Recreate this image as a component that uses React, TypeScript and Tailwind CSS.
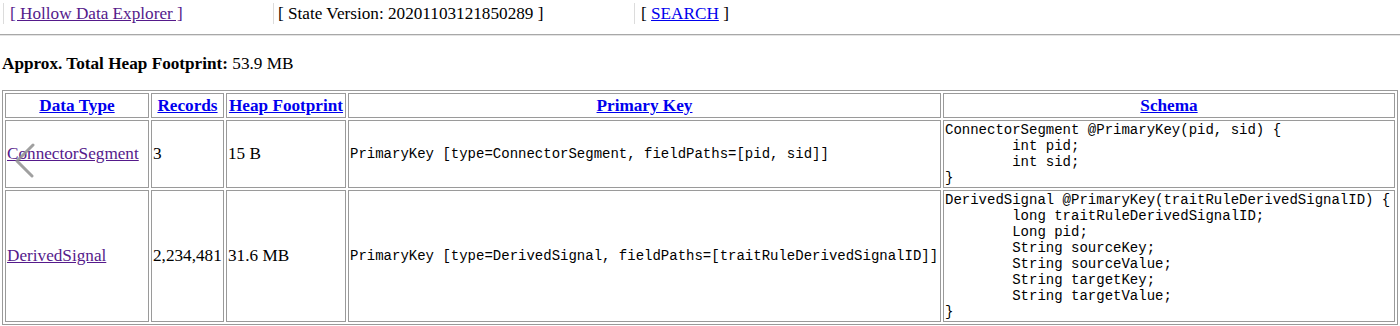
import React from "react";

const serif = "font-['Liberation_Serif','Times_New_Roman',serif]";
const mono = "font-['Liberation_Mono','Courier_New',monospace]";

type Row = {
  name: string;
  records: string;
  heap: string;
  primaryKey: string;
  schema: string[];
};

const rows: Row[] = [
  {
    name: "ConnectorSegment",
    records: "3",
    heap: "15 B",
    primaryKey: "PrimaryKey [type=ConnectorSegment, fieldPaths=[pid, sid]]",
    schema: [
      "ConnectorSegment @PrimaryKey(pid, sid) {",
      "        int pid;",
      "        int sid;",
      "}",
    ],
  },
  {
    name: "DerivedSignal",
    records: "2,234,481",
    heap: "31.6 MB",
    primaryKey: "PrimaryKey [type=DerivedSignal, fieldPaths=[traitRuleDerivedSignalID]]",
    schema: [
      "DerivedSignal @PrimaryKey(traitRuleDerivedSignalID) {",
      "        long traitRuleDerivedSignalID;",
      "        Long pid;",
      "        String sourceKey;",
      "        String sourceValue;",
      "        String targetKey;",
      "        String targetValue;",
      "}",
    ],
  },
];

const cell = "border border-[#9a9a9a] p-px align-middle";

export default function App() {
  return (
    <div className={`${serif} relative h-[326px] w-[1400px] overflow-hidden bg-white text-[17.2px] text-black`}>
      {/* Top nav */}
      <div className="flex pt-[3px]">
        <div className="ml-[3px] h-[21px] w-[270px] border-l border-[#dcdcdc] pl-[6px] leading-[22px]">
          <a href="#" className="text-[#551a8b] underline">[ Hollow Data Explorer ]</a>
        </div>
        <div className="h-[21px] w-[361px] border-l border-[#dcdcdc] pl-[4px] leading-[22px]">
          [ State Version: 20201103121850289 ]
        </div>
        <div className="h-[21px] border-l border-[#dcdcdc] pl-[6px] leading-[22px]">
          [ <a href="#" className="text-[#0000ee] underline">SEARCH</a> ]
        </div>
      </div>
      <div className="mt-[10px] border-t border-b border-t-[#a8a8a8] border-b-[#e4e4e4]" />

      {/* Summary */}
      <div className="mt-[18px] pl-[2px] leading-[20px]">
        <span className="font-bold">Approx. Total Heap Footprint:</span> 53.9 MB
      </div>

      {/* Types table */}
      <table className="ml-[2px] mt-[16px] w-[1396px] table-fixed border-separate border-spacing-[2px] border border-[#9a9a9a]">
        <colgroup>
          <col className="w-[144px]" />
          <col className="w-[73px]" />
          <col className="w-[120px]" />
          <col className="w-[593px]" />
          <col />
        </colgroup>
        <thead>
          <tr className="h-[25px]">
            {["Data Type", "Records", "Heap Footprint", "Primary Key", "Schema"].map((h) => (
              <th key={h} className={`${cell} text-center font-bold leading-[19px] whitespace-nowrap`}>
                <a href="#" className="text-[#0000ee] underline">{h}</a>
              </th>
            ))}
          </tr>
        </thead>
        <tbody>
          {rows.map((r) => (
            <tr key={r.name}>
              <td className={`${cell} text-left`}>
                <a href="#" className="text-[#551a8b] underline">{r.name}</a>
              </td>
              <td className={`${cell} whitespace-nowrap`}>{r.records}</td>
              <td className={`${cell} whitespace-nowrap`}>{r.heap}</td>
              <td className={`${cell} ${mono} whitespace-nowrap text-[14px]`}>{r.primaryKey}</td>
              <td className={cell}>
                <pre className={`${mono} m-0 text-[14px] leading-[16px]`}>{r.schema.join("\n")}</pre>
              </td>
            </tr>
          ))}
        </tbody>
      </table>

      {/* Back-swipe chevron overlay */}
      <svg className="pointer-events-none absolute left-[13px] top-[143px]" width="24" height="36" viewBox="0 0 24 36">
        <path d="M20 2 L4 18 L19 33" fill="none" stroke="#8f8f8f" strokeWidth="3" strokeLinecap="round" strokeLinejoin="round" opacity="0.85" />
      </svg>
    </div>
  );
}
